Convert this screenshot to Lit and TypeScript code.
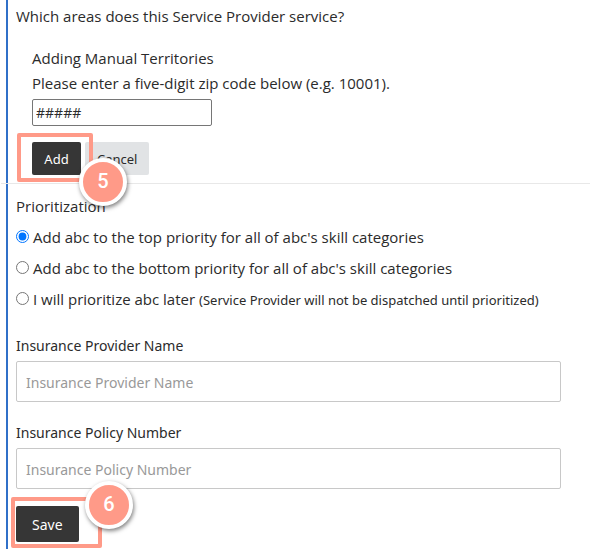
import { LitElement, html, css } from "lit";
import { customElement, property, state } from "lit/decorators.js";

@customElement("step-badge")
class StepBadge extends LitElement {
  @property() label = "";

  static styles = css`
    :host {
      display: flex;
      align-items: center;
      justify-content: center;
      box-sizing: border-box;
      width: 48px;
      height: 48px;
      border: 4px solid #fff;
      border-radius: 50%;
      background: #ff9a88;
      box-shadow: 1px 2px 4px rgba(0, 0, 0, 0.5);
      color: #fff;
      font: 500 20px/24px Roboto, "Liberation Sans", sans-serif;
      padding-bottom: 2px;
    }
  `;

  render() {
    return html`${this.label}`;
  }
}

@customElement("app-root")
class AppRoot extends LitElement {
  @state() private priority = "top";

  static styles = css`
    :host {
      display: block;
      overflow: hidden;
      background: #fff;
      color: #2b2b2b;
      font: 15px/25px "Open Sans", "Noto Sans", sans-serif;
    }
    * {
      box-sizing: border-box;
    }
    .panel {
      margin-left: 6px;
      border-left: 2px solid #3070c8;
      padding: 4px 29px 7px 8px;
    }
    p,
    h2,
    fieldset {
      margin: 0;
      padding: 0;
      border: 0;
      font: inherit;
    }
    .territory {
      padding: 17px 0 0 16px;
    }
    label {
      display: block;
    }
    input,
    button {
      font: inherit;
      font-size: 14px;
      color: inherit;
    }
    .zip {
      display: block;
      width: 180px;
      height: 27px;
      margin-top: 3px;
      padding: 0 3px;
      border: 1px solid #767676;
      border-radius: 2px;
      background: #fff;
    }
    .actions {
      display: flex;
      gap: 4px;
      margin-top: 16px;
    }
    .marked {
      position: relative;
      display: flex;
    }
    .button {
      min-width: 49px;
      height: 33px;
      padding: 2px 12px 0;
      border: 0;
      border-radius: 2px;
      background: #e1e3e5;
      font-family: "Noto Sans", "Open Sans", sans-serif;
      font-size: 13px;
    }
    .dark {
      background: #363636;
      color: #fff;
    }
    .large {
      height: 36px;
      padding: 0 16px;
      font-size: 14px;
    }
    .frame {
      position: absolute;
      z-index: 1;
      border: 4px solid #ff9a88;
      border-radius: 2px;
      pointer-events: none;
    }
    .frame-add {
      inset: -9px -12px -7px -15px;
    }
    .frame-save {
      inset: -9px -23px -6px -5px;
    }
    step-badge {
      position: absolute;
      z-index: 2;
    }
    .badge-add {
      left: 47px;
      top: 16px;
    }
    .badge-save {
      left: 69px;
      top: -25px;
    }
    .divider {
      height: 1px;
      margin: 8px -29px 10px -15px;
      border: 0;
      background: #e8e8e8;
    }
    .option {
      display: flex;
      align-items: center;
      gap: 4px;
      height: 31px;
    }
    .options {
      padding-top: 3px;
    }
    .option input {
      width: 13px;
      height: 13px;
      margin: 0 0 2px;
      accent-color: #0075ff;
    }
    .option small {
      font-family: "Noto Sans", "Open Sans", sans-serif;
      font-size: 13px;
    }
    .field {
      margin-top: 18px;
      font-family: "Noto Sans", "Open Sans", sans-serif;
      font-size: 14px;
    }
    .text {
      display: block;
      width: 100%;
      height: 41px;
      margin-top: 3px;
      padding: 2px 9px 0;
      border: 1px solid #c8c8c8;
      border-radius: 2px;
      background: #fff;
    }
    .text::placeholder {
      color: #999;
      opacity: 1;
    }
    .save {
      width: max-content;
      margin-top: 17px;
    }
  `;

  private option(value: string, text: string, note = "") {
    return html`<label class="option">
      <input
        type="radio"
        name="priority"
        .value=${value}
        .checked=${this.priority === value}
        @change=${() => (this.priority = value)}
      />
      <span>${text}${note ? html` <small>${note}</small>` : ""}</span>
    </label>`;
  }

  render() {
    return html`
      <form class="panel" @submit=${(e: Event) => e.preventDefault()}>
        <p>Which areas does this Service Provider service?</p>
        <section class="territory">
          <h2>Adding Manual Territories</h2>
          <label for="zip">Please enter a five-digit zip code below (e.g. 10001).</label>
          <input class="zip" id="zip" type="text" value="#####" />
          <div class="actions">
            <div class="marked">
              <button class="button dark" type="button">Add</button>
              <span class="frame frame-add"></span>
              <step-badge class="badge-add" label="5"></step-badge>
            </div>
            <button class="button" type="button">Cancel</button>
          </div>
        </section>
        <hr class="divider" />
        <fieldset aria-labelledby="priority-title">
          <p id="priority-title">Prioritization</p>
          <div class="options">
            ${this.option("top", "Add abc to the top priority for all of abc's skill categories")}
            ${this.option("bottom", "Add abc to the bottom priority for all of abc's skill categories")}
            ${this.option("later", "I will prioritize abc later", "(Service Provider will not be dispatched until prioritized)")}
          </div>
        </fieldset>
        <div class="field">
          <label for="provider">Insurance Provider Name</label>
          <input class="text" id="provider" type="text" placeholder="Insurance Provider Name" />
        </div>
        <div class="field">
          <label for="policy">Insurance Policy Number</label>
          <input class="text" id="policy" type="text" placeholder="Insurance Policy Number" />
        </div>
        <div class="marked save">
          <button class="button dark large" type="submit">Save</button>
          <span class="frame frame-save"></span>
          <step-badge class="badge-save" label="6"></step-badge>
        </div>
      </form>
    `;
  }
}
